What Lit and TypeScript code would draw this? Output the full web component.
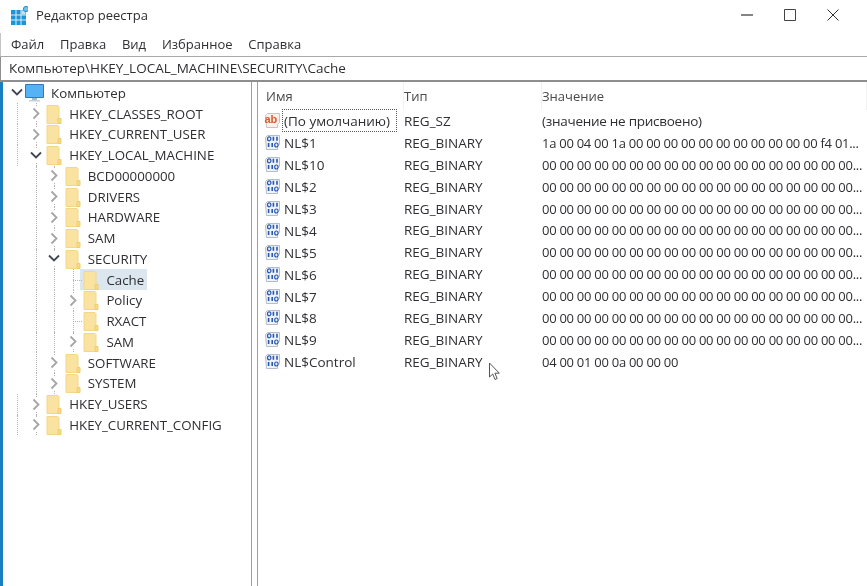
import { LitElement, html, css, svg } from "lit";
import { customElement } from "lit/decorators.js";

type Node = { label: string; depth: number; open?: boolean; leaf?: boolean; selected?: boolean };

const TREE: Node[] = [
  { label: "HKEY_CLASSES_ROOT", depth: 1 },
  { label: "HKEY_CURRENT_USER", depth: 1 },
  { label: "HKEY_LOCAL_MACHINE", depth: 1, open: true },
  { label: "BCD00000000", depth: 2 },
  { label: "DRIVERS", depth: 2 },
  { label: "HARDWARE", depth: 2 },
  { label: "SAM", depth: 2 },
  { label: "SECURITY", depth: 2, open: true },
  { label: "Cache", depth: 3, leaf: true, selected: true },
  { label: "Policy", depth: 3 },
  { label: "RXACT", depth: 3, leaf: true },
  { label: "SAM", depth: 3 },
  { label: "SOFTWARE", depth: 2 },
  { label: "SYSTEM", depth: 2 },
  { label: "HKEY_USERS", depth: 1 },
  { label: "HKEY_CURRENT_CONFIG", depth: 1 },
];

const ZEROS = "00 00 00 00 00 00 00 00 00 00 00 00 00 00 00 00 00 00...";

const VALUES = [
  { name: "(По умолчанию)", type: "REG_SZ", value: "(значение не присвоено)", text: true },
  { name: "NL$1", type: "REG_BINARY", value: "1a 00 04 00 1a 00 00 00 00 00 00 00 00 00 00 00 f4 01..." },
  { name: "NL$10", type: "REG_BINARY", value: ZEROS },
  { name: "NL$2", type: "REG_BINARY", value: ZEROS },
  { name: "NL$3", type: "REG_BINARY", value: ZEROS },
  { name: "NL$4", type: "REG_BINARY", value: ZEROS },
  { name: "NL$5", type: "REG_BINARY", value: ZEROS },
  { name: "NL$6", type: "REG_BINARY", value: ZEROS },
  { name: "NL$7", type: "REG_BINARY", value: ZEROS },
  { name: "NL$8", type: "REG_BINARY", value: ZEROS },
  { name: "NL$9", type: "REG_BINARY", value: ZEROS },
  { name: "NL$Control", type: "REG_BINARY", value: "04 00 01 00 0a 00 00 00" },
];

const MENU = ["Файл", "Правка", "Вид", "Избранное", "Справка"];

const folder = html`<svg class="folder" width="16" height="20" viewBox="0 0 16 20">
  <path d="M1 1.5h11l1 1v17H1z" fill="#fae3a0" stroke="#f3d786" />
  <path d="M12 14.5h3v5h-3z" fill="#f8da84" stroke="#f0cd70" />
</svg>`;

const chevronRight = svg`<path d="M3.5 1.5l5 5-5 5" fill="none" stroke="#a6a6a6" stroke-width="1.8" />`;
const chevronDown = svg`<path d="M1 3.5l5 5 5-5" fill="none" stroke="#404652" stroke-width="1.8" />`;

@customElement("app-root")
export class AppRoot extends LitElement {
  static styles = css`
    :host {
      display: block;
      width: 867px;
      height: 586px;
      overflow: hidden;
      position: relative;
      background: #fff;
      font-family: "Open Sans", "Noto Sans", sans-serif;
      font-size: 13.5px;
      color: #2f2f33;
    }
    .window {
      height: 100%;
      display: flex;
      flex-direction: column;
      filter: blur(0.3px);
    }
    .title {
      height: 33px;
      box-sizing: border-box;
      display: flex;
      align-items: center;
      padding: 0 0 3px 8px;
      flex: none;
    }
    .title .app {
      margin-right: 8px;
      flex: none;
    }
    .title .name {
      flex: 1;
      font-size: 13px;
    }
    .controls {
      display: flex;
      gap: 31px;
      padding-right: 28px;
      align-items: center;
    }
    .menu {
      height: 24px;
      box-sizing: border-box;
      flex: none;
      display: flex;
      align-items: center;
      padding: 0 0 2px 10px;
      gap: 15.8px;
      border-left: 1px solid #c4c4c4;
      border-bottom: 1px solid #a8a8a8;
      font-size: 13px;
    }
    .address {
      height: 25px;
      box-sizing: border-box;
      flex: none;
      display: flex;
      align-items: center;
      padding: 0 0 2px 8px;
      border-left: 1px solid #8e8e8e;
      border-bottom: 2px solid #8e8e8e;
      font-size: 13.5px;
      white-space: nowrap;
    }
    .panes {
      flex: 1;
      display: flex;
      min-height: 0;
      border-left: 3px solid #1a7fc0;
    }
    .tree {
      width: 248px;
      flex: none;
      padding-top: 0.5px;
      border-right: 1px solid #9e9e9e;
      font-size: 13.3px;
    }
    .node {
      display: flex;
      align-items: center;
      height: 20.75px;
      padding-left: 5px;
      white-space: nowrap;
    }
    .cell {
      width: 18.6px;
      height: 100%;
      flex: none;
      position: relative;
      display: flex;
      align-items: center;
      justify-content: center;
    }
    .cell.line::before {
      content: "";
      position: absolute;
      left: 50%;
      top: 0;
      bottom: 0;
      border-left: 1px dotted #b4b4b4;
    }
    .cell.tick::after {
      content: "";
      position: absolute;
      left: 50%;
      right: 0;
      top: 50%;
      border-top: 1px dotted #b4b4b4;
    }
    .chev {
      position: relative;
      background: #fff;
    }
    .item {
      display: flex;
      align-items: center;
      height: 100%;
      margin-left: -2.4px;
      padding-left: 3.4px;
    }
    .item.selected {
      background: #dbe6ef;
    }
    .folder {
      flex: none;
    }
    .label {
      margin-left: 4px;
      padding: 0 3px;
      line-height: 20px;
    }
    .monitor {
      flex: none;
      margin-left: -3px;
    }
    .root-label {
      margin-left: 3.5px;
    }
    .list {
      flex: 1;
      min-width: 0;
      border-left: 1px solid #9e9e9e;
      margin-left: 5px;
      padding-left: 8px;
    }
    .head,
    .row {
      display: grid;
      grid-template-columns: 138px 138px 1fr;
      align-items: center;
    }
    .head {
      height: 28px;
      color: #4a4a4a;
      font-size: 13px;
    }
    .head span {
      height: 100%;
      display: flex;
      align-items: center;
      border-right: 1px solid #f2f2f2;
    }
    .row {
      height: 21.9px;
      white-space: nowrap;
    }
    .nm {
      display: flex;
      align-items: center;
      gap: 2px;
      margin-left: -2px;
      min-width: 0;
    }
    .nm b {
      font-weight: 400;
      padding: 1px 1px 0;
      line-height: 20px;
    }
    .focus b {
      outline: 1px dotted #555;
      padding-right: 6px;
    }
    .val {
      letter-spacing: -0.27px;
    }
    .val.hex {
      font-size: 13px;
      letter-spacing: -0.27px;
    }
    .cursor {
      position: absolute;
      left: 488px;
      top: 362px;
    }
  `;

  private node(n: Node) {
    const cells = [];
    for (let i = 0; i < n.depth - 1; i++) {
      cells.push(html`<span class="cell ${i > 0 ? "line" : ""}"></span>`);
    }
    return html`<div class="node">
      ${cells}
      <span class="cell line"></span>
      <span class="cell line ${n.leaf ? "tick" : ""}">
        ${n.leaf
          ? ""
          : html`<svg class="chev" width="12" height="13" viewBox="0 0 12 13">
              ${n.open ? chevronDown : chevronRight}
            </svg>`}
      </span>
      <span class="item ${n.selected ? "selected" : ""}">
        ${folder}
        <span class="label">${n.label}</span>
      </span>
    </div>`;
  }

  private valueIcon(text?: boolean) {
    return text
      ? html`<svg width="17" height="17" viewBox="0 0 17 17">
          <path d="M1.5 3.5l2-2h12v9l-2 2v3h-11z" fill="#fbf1ea" stroke="#c4c4c4" />
          <text x="0.5" y="11" font-family="Liberation Sans" font-weight="700" font-size="11" fill="#e2572a">ab</text>
        </svg>`
      : html`<svg width="17" height="17" viewBox="0 0 17 17">
          <path d="M1.5 3.5l2-2h12v9l-2 2v3h-11z" fill="#eef3fb" stroke="#b5bdc9" />
          <ellipse cx="5.2" cy="4.8" rx="1.7" ry="2" fill="none" stroke="#2a58b0" stroke-width="1.2" />
          <path d="M9.4 2.8v4M13 2.8v4M4.6 9v4M8.2 9v4" stroke="#2a58b0" stroke-width="1.6" />
          <ellipse cx="12.4" cy="11" rx="1.7" ry="2" fill="none" stroke="#2a58b0" stroke-width="1.2" />
        </svg>`;
  }

  render() {
    return html`
      <div class="window">
        <div class="title">
          <svg class="app" width="20" height="20" viewBox="0 0 20 20">
            <path d="M3 5h15v15H3z" fill="#1c95d8" />
            <path d="M8 5v15M13 5v15M3 10h15M3 15h15" stroke="#d8eefa" stroke-width="1" />
            <path d="M13.5 5.5h4v4h-4z" fill="#bfe3f6" />
            <circle cx="18" cy="4" r="2.6" fill="#6cc3ec" stroke="#2a8cc8" />
          </svg>
          <span class="name">Редактор реестра</span>
          <div class="controls">
            <svg width="12" height="12" viewBox="0 0 12 12"><path d="M0 6h12" stroke="#333" stroke-width="1.2" /></svg>
            <svg width="12" height="12" viewBox="0 0 12 12"><path d="M.5.5h11v11H.5z" fill="none" stroke="#444" /></svg>
            <svg width="12" height="12" viewBox="0 0 12 12"><path d="M.5.5l11 11M11.5.5l-11 11" stroke="#333" /></svg>
          </div>
        </div>
        <div class="menu">${MENU.map((m) => html`<span>${m}</span>`)}</div>
        <div class="address">Компьютер\\HKEY_LOCAL_MACHINE\\SECURITY\\Cache</div>
        <div class="panes">
          <div class="tree">
            <div class="node">
              <span class="cell">
                <svg width="12" height="13" viewBox="0 0 12 13">${chevronDown}</svg>
              </span>
              <svg class="monitor" width="21" height="18" viewBox="0 0 21 18">
                <path d="M1.5 .5h18v13h-18z" fill="#55b2f4" stroke="#3478b4" />
                <path d="M8 14h5v2H8z" fill="#a9b8c6" />
                <path d="M5 16h11v1.5H5z" fill="#c7d2dc" />
              </svg>
              <span class="label root-label">Компьютер</span>
            </div>
            ${TREE.map((n) => this.node(n))}
          </div>
          <div class="list">
            <div class="head"><span>Имя</span><span>Тип</span><span>Значение</span></div>
            ${VALUES.map(
              (v) => html`<div class="row">
                <span class="nm ${v.text ? "focus" : ""}">${this.valueIcon(v.text)}<b>${v.name}</b></span>
                <span>${v.type}</span>
                <span class="val ${v.text ? "" : "hex"}">${v.value}</span>
              </div>`
            )}
          </div>
        </div>
      </div>
      <svg class="cursor" width="14" height="20" viewBox="0 0 14 20">
        <path d="M1.5 1v14l3.2-3 2.3 5.5 2.2-1-2.3-5.3h4.4z" fill="#fff" stroke="#555" />
      </svg>
    `;
  }
}
